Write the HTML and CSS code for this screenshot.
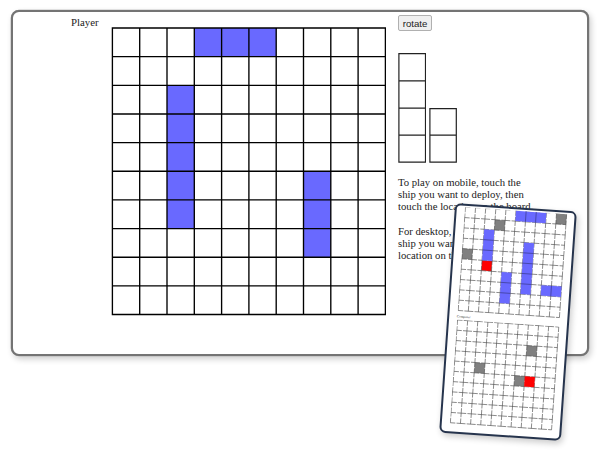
FILE: index.html
```
<!DOCTYPE html>
<html lang="en">
<head>
<meta charset="utf-8">
<title>Battleship</title>
<link rel="stylesheet" href="styles.css">
</head>
<body>
<main class="game">
  <div class="player-name">Player</div>
  <svg class="board" width="275" height="289" viewBox="-1.4 -1 275 289">
    <g class="ship">
      <path d="M81.9 0h81.9v28.65H81.9zM54.6 57.3h27.3v143.25H54.6zM191.1 143.25h27.3v85.95h-27.3z"/>
    </g>
    <path class="grid-line" d="M0 0V286.5M27.3 0V286.5M54.6 0V286.5M81.9 0V286.5M109.2 0V286.5M136.5 0V286.5M163.8 0V286.5M191.1 0V286.5M218.4 0V286.5M245.7 0V286.5M273 0V286.5M0 0H273M0 28.65H273M0 57.3H273M0 85.95H273M0 114.6H273M0 143.25H273M0 171.9H273M0 200.55H273M0 229.2H273M0 257.85H273M0 286.5H273"/>
  </svg>
  <section class="controls">
    <button class="rotate">rotate</button>
    <div class="dock">
      <svg width="28" height="110" viewBox="-.9 -.6 28 110"><path class="dock-line" d="M0 0H26.6V108.6H0zM0 27.2H26.6M0 54.5H26.6M0 81.5H26.6"/></svg>
      <svg width="28" height="55" viewBox="-.9 -.6 28 55"><path class="dock-line" d="M0 0H26.4V53.6H0zM0 26.6H26.4"/></svg>
    </div>
    <p>To play on mobile, touch the<br>ship you want to deploy, then<br>touch the location on the board.</p>
    <p>For desktop, drag the<br>ship you want to the<br>location on the board.</p>
  </section>
</main>
<aside class="mobile">
  <svg class="mini" width="103" height="104.5" viewBox="-.5 -.5 103 104.5">
    <g transform="scale(10.15 10.35)">
      <path class="miss" d="M9 0h1v1h-1zM3 1h1v1h-1zM0 4h1v1h-1z"/>
      <path class="hit" d="M2 5h1v1h-1z"/>
      <path class="mini-line" d="M0 0V10M1 0V10M2 0V10M3 0V10M4 0V10M5 0V10M6 0V10M7 0V10M8 0V10M9 0V10M10 0V10M0 1H10M0 2H10M0 3H10M0 4H10M0 5H10M0 6H10M0 7H10M0 8H10M0 9H10M0 10H10"/>
      <path class="mini-edge" d="M0 0H10"/>
      <path class="ship" d="M5 0h3v1h-3zM2 2h1v3h-1zM6 3h1v5h-1zM4 6h1v3h-1zM8 7h2v1h-2z"/>
      <path class="ship-line" d="M6 0V1M7 0V1M2 3H3M2 4H3M6 4H7M6 5H7M6 6H7M6 7H7M4 7H5M4 8H5M9 7V8"/>
    </g>
  </svg>
  <div class="mini-name">Computer</div>
  <svg class="mini" width="103" height="104.5" viewBox="-.5 -.5 103 104.5">
    <g transform="scale(10.15 10.3)">
      <path class="miss" d="M7 2h1v1h-1zM2 4h1v1h-1zM6 5h1v1h-1z"/>
      <path class="mini-line" d="M0 0V10M1 0V10M2 0V10M3 0V10M4 0V10M5 0V10M6 0V10M7 0V10M8 0V10M9 0V10M10 0V10M0 0H10M0 1H10M0 2H10M0 3H10M0 4H10M0 5H10M0 6H10M0 7H10M0 8H10M0 9H10M0 10H10"/>
      <path class="hit" d="M7 5h1v1h-1z"/>
    </g>
  </svg>
</aside>
</body>
</html>
```
FILE: styles.css
```
* { box-sizing: border-box; }

body {
  margin: 0;
  padding: 9.7px 11px;
  height: 454px;
  overflow: hidden;
  background: #fff;
  color: #222;
  font-family: "Liberation Serif", serif;
}

.game {
  display: flex;
  align-items: flex-start;
  width: 578px;
  height: 346px;
  border: 2px solid #747474;
  border-radius: 8px;
  background: #fff;
  box-shadow: 0 0 0 .3px #999, 2px 3px 6px rgba(0, 0, 0, .2);
}

.player-name {
  width: 98.4px;
  padding: 4.2px 0 0 58px;
  font-size: 10.8px;
  line-height: 12.2px;
}

.board { display: block; margin-top: 15.3px; }

.ship { fill: #6969ff; }
.miss { fill: #808080; }
.hit { fill: #f00; }

.grid-line, .dock-line, .mini-line, .mini-edge, .ship-line { fill: none; stroke: #000; }
.grid-line { stroke-width: 1.35; stroke-linecap: square; }
.dock-line { stroke: #222; stroke-width: 1.2; }
.mini-line, .mini-edge, .ship-line { vector-effect: non-scaling-stroke; }
.mini-line {
  stroke: #505050;
  stroke-width: .65px;
  stroke-dasharray: 9 1.2;
  stroke-dashoffset: 4;
}
.mini-edge { stroke: #aaa; stroke-width: .5px; stroke-dasharray: 5 5; }
.ship-line { stroke: #33337a; stroke-width: .6px; }

.controls { padding: 3.5px 0 0 11.6px; width: 190px; }

.rotate {
  display: block;
  width: 34px;
  height: 16px;
  padding: 0;
  border: 1px solid #b0b0b0;
  border-radius: 2px;
  background: #efefef;
  color: #222;
  font: 9.6px/13px "Liberation Sans", sans-serif;
}

.dock {
  display: flex;
  align-items: flex-end;
  gap: 2.9px;
  height: 110px;
  margin: 22.2px 0 12.6px;
}
.dock svg { display: block; }

.controls p {
  margin: 0 0 12.2px;
  font-size: 10.7px;
  line-height: 12.15px;
  white-space: nowrap;
}

.mobile {
  position: absolute;
  left: 447.1px;
  top: 207.4px;
  width: 122px;
  height: 230px;
  padding: 1.4px 0 0 7.6px;
  border: 2px solid #26344d;
  border-radius: 6px;
  background: #fff;
  box-shadow: 2px 3px 6px rgba(0, 0, 0, .2);
  transform: rotate(4deg);
}

.mini { display: block; }

.mini-name {
  height: 8.2px;
  padding-top: 4.6px;
  font-size: 3.4px;
  line-height: 3.5px;
}
```
